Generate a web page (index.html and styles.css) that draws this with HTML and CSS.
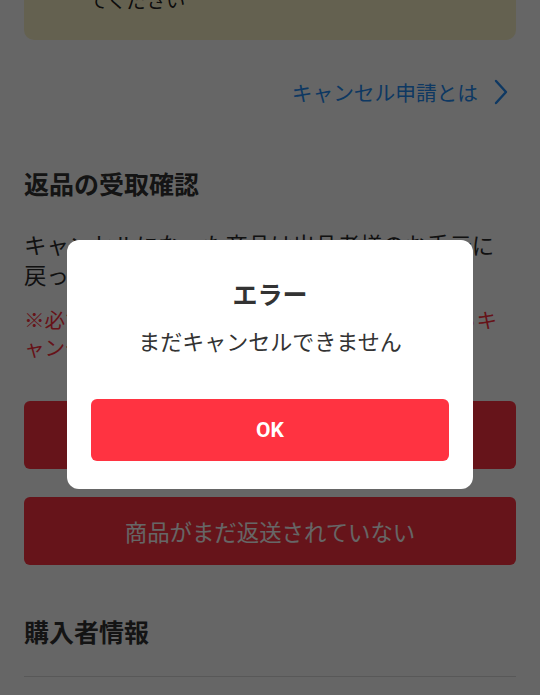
FILE: index.html
```html
<!DOCTYPE html>
<html lang="ja">
<head>
    <meta charset="UTF-8">
    <meta name="viewport" content="width=device-width, initial-scale=1.0">
    <title>キャンセル申請</title>

    <link rel="stylesheet" href="styles.css">
</head>
<body>
    <div class="page">
        <div class="notice-card">
            <ul class="notice-list">
                <li>出品者様から返品の連絡があるまでお待ちしてください</li>
            </ul>
        </div>

        <a class="help-link" href="#">
            <span>キャンセル申請とは</span>
            <svg class="chevron" width="14" height="26" viewBox="0 0 14 26">
                <polyline points="2,2 12,13 2,24" fill="none" stroke="currentColor" stroke-width="2.4" stroke-linecap="round" stroke-linejoin="round"/>
            </svg>
        </a>

        <h2 class="section-title first">返品の受取確認</h2>
        <p class="section-text">キャンセルになった商品は出品者様のお手元に戻ったことを確認してください。</p>
        <p class="warning-text">※必ず商品がお手元に届いたことを確認してからキャンセル申請を承認してください</p>

        <button class="action-button" type="button">商品の受取を確認した</button>
        <button class="action-button second" type="button">商品がまだ返送されていない</button>

        <h2 class="section-title buyer">購入者情報</h2>
        <div class="divider"></div>
    </div>

    <div class="overlay">
        <div class="dialog">
            <div class="dialog-title">エラー</div>
            <div class="dialog-message">まだキャンセルできません</div>
            <button class="dialog-button" type="button">OK</button>
        </div>
    </div>
</body>
</html>
```

FILE: styles.css
```css
body {
    margin: 0;
    padding: 0;
    background: #fff;
    font-family: Roboto, "Noto Sans CJK JP", sans-serif;
    color: #2b2b2b;
    overflow: hidden;
}

button {
    border-style: none;
    padding: 0;
    cursor: pointer;
    font-family: inherit;
}

.page {
    margin-top: -63px;
    padding: 0 24px;
}

.notice-card {
    background: #fbf3c8;
    border-radius: 10px;
    padding: 20px 24px 23px 64px;
}

.notice-list {
    margin: 0;
    padding: 0;
    list-style: none;
    font-size: 19.6px;
    line-height: 30px;
    color: #222;
}

.help-link {
    display: flex;
    justify-content: flex-end;
    align-items: center;
    gap: 16px;
    margin-top: 37px;
    padding-right: 8px;
    height: 30px;
    font-size: 20.7px;
    color: #238cf5;
    text-decoration: none;
}

.chevron {
    display: block;
}

.section-title {
    margin: 0;
    font-size: 25px;
    line-height: 34px;
    font-weight: 700;
    color: #333;
}

.section-title.first {
    margin-top: 62px;
}

.section-title.buyer {
    margin-top: 52px;
}

.section-text {
    margin: 28px 0 0;
    font-size: 22.4px;
    line-height: 30px;
}

.warning-text {
    margin: 16px 0 0;
    font-size: 20.6px;
    line-height: 28px;
    color: #ff3040;
}

.action-button {
    display: block;
    width: 100%;
    height: 68px;
    margin-top: 38px;
    border-radius: 6px;
    background: #ff3341;
    color: #fff;
    font-size: 22.4px;
}

.action-button.second {
    margin-top: 28px;
}

.divider {
    margin-top: 25px;
    height: 1px;
    background: #dcdcdc;
}

.overlay {
    position: fixed;
    top: 0;
    left: 0;
    width: 100%;
    height: 100%;
    box-sizing: border-box;
    padding-top: 34px;
    background: rgba(0, 0, 0, 0.6);
    display: flex;
    justify-content: center;
    align-items: center;
}

.dialog {
    width: 406px;
    box-sizing: border-box;
    padding: 39px 24px 28px;
    background: #fff;
    border-radius: 12px;
    text-align: center;
    color: #333;
}

.dialog-title {
    font-size: 25px;
    line-height: 34px;
    font-weight: 700;
}

.dialog-message {
    margin-top: 15px;
    font-size: 22px;
    line-height: 30px;
}

.dialog-button {
    display: block;
    width: 100%;
    height: 62px;
    margin-top: 41px;
    border-radius: 6px;
    background: #ff3341;
    color: #fff;
    font-size: 21px;
    font-weight: 700;
}
```
